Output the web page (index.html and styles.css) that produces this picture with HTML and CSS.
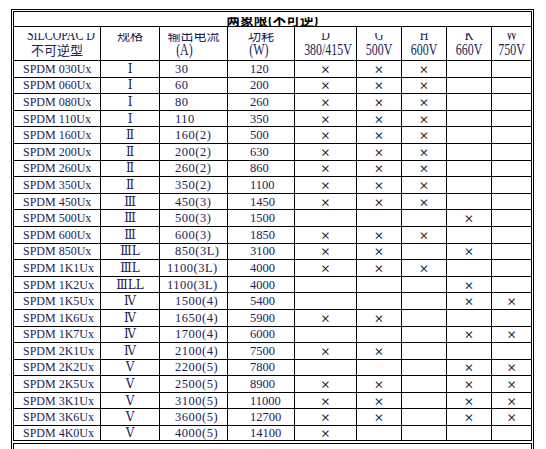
FILE: index.html
```html
<!DOCTYPE html>
<html lang="zh">
<head>
<meta charset="utf-8">
<title>两象限(不可逆)</title>
<link rel="stylesheet" href="styles.css">
</head>
<body>
<div class="frame">
<table class="grid">
<colgroup>
<col class="c1"><col class="c2"><col class="c3"><col class="c4"><col class="c5"><col class="c6"><col class="c7"><col class="c8"><col class="c9">
</colgroup>
<tr class="title"><td colspan="9"><div class="tclip"><span>两象限(不可逆)</span></div></td></tr>
<tr class="head">
<th><div class="h1"><span class="lat">SILCOPAC D</span></div><div class="h2 cjk">不可逆型</div></th>
<th><div class="h1"><span class="cjk">规格</span></div></th>
<th><div class="h1"><span class="cjk">输出电流</span></div><div class="h2 lat padA">(A)</div></th>
<th><div class="h1"><span class="cjk">功耗</span></div><div class="h2 lat padW">(W)</div></th>
<th><div class="h1"><span class="lat">D</span></div><div class="h2 lat">380/415V</div></th>
<th><div class="h1"><span class="lat">G</span></div><div class="h2 lat">500V</div></th>
<th><div class="h1"><span class="lat">H</span></div><div class="h2 lat">600V</div></th>
<th><div class="h1"><span class="lat">K</span></div><div class="h2 lat">660V</div></th>
<th><div class="h1"><span class="lat">W</span></div><div class="h2 lat">750V</div></th>
</tr>
<tr class="d"><td class="m">SPDM 030Ux</td><td class="r">Ⅰ</td><td class="a">30</td><td class="w">120</td><td class="x">×</td><td class="x">×</td><td class="x">×</td><td class="x"></td><td class="x"></td></tr>
<tr class="d"><td class="m">SPDM 060Ux</td><td class="r">Ⅰ</td><td class="a">60</td><td class="w">200</td><td class="x">×</td><td class="x">×</td><td class="x">×</td><td class="x"></td><td class="x"></td></tr>
<tr class="d"><td class="m">SPDM 080Ux</td><td class="r">Ⅰ</td><td class="a">80</td><td class="w">260</td><td class="x">×</td><td class="x">×</td><td class="x">×</td><td class="x"></td><td class="x"></td></tr>
<tr class="d"><td class="m">SPDM 110Ux</td><td class="r">Ⅰ</td><td class="a">110</td><td class="w">350</td><td class="x">×</td><td class="x">×</td><td class="x">×</td><td class="x"></td><td class="x"></td></tr>
<tr class="d"><td class="m">SPDM 160Ux</td><td class="r">Ⅱ</td><td class="a">160(2)</td><td class="w">500</td><td class="x">×</td><td class="x">×</td><td class="x">×</td><td class="x"></td><td class="x"></td></tr>
<tr class="d"><td class="m">SPDM 200Ux</td><td class="r">Ⅱ</td><td class="a">200(2)</td><td class="w">630</td><td class="x">×</td><td class="x">×</td><td class="x">×</td><td class="x"></td><td class="x"></td></tr>
<tr class="d"><td class="m">SPDM 260Ux</td><td class="r">Ⅱ</td><td class="a">260(2)</td><td class="w">860</td><td class="x">×</td><td class="x">×</td><td class="x">×</td><td class="x"></td><td class="x"></td></tr>
<tr class="d"><td class="m">SPDM 350Ux</td><td class="r">Ⅱ</td><td class="a">350(2)</td><td class="w">1100</td><td class="x">×</td><td class="x">×</td><td class="x">×</td><td class="x"></td><td class="x"></td></tr>
<tr class="d"><td class="m">SPDM 450Ux</td><td class="r">Ⅲ</td><td class="a">450(3)</td><td class="w">1450</td><td class="x">×</td><td class="x">×</td><td class="x">×</td><td class="x"></td><td class="x"></td></tr>
<tr class="d"><td class="m">SPDM 500Ux</td><td class="r">Ⅲ</td><td class="a">500(3)</td><td class="w">1500</td><td class="x"></td><td class="x"></td><td class="x"></td><td class="x">×</td><td class="x"></td></tr>
<tr class="d"><td class="m">SPDM 600Ux</td><td class="r">Ⅲ</td><td class="a">600(3)</td><td class="w">1850</td><td class="x">×</td><td class="x">×</td><td class="x">×</td><td class="x"></td><td class="x"></td></tr>
<tr class="d"><td class="m">SPDM 850Ux</td><td class="r">ⅢL</td><td class="a">850(3L)</td><td class="w">3100</td><td class="x">×</td><td class="x">×</td><td class="x"></td><td class="x">×</td><td class="x"></td></tr>
<tr class="d"><td class="m">SPDM 1K1Ux</td><td class="r">ⅢL</td><td class="a ac">1100(3L)</td><td class="w">4000</td><td class="x">×</td><td class="x">×</td><td class="x">×</td><td class="x"></td><td class="x"></td></tr>
<tr class="d"><td class="m">SPDM 1K2Ux</td><td class="r">ⅢLL</td><td class="a ac">1100(3L)</td><td class="w">4000</td><td class="x"></td><td class="x"></td><td class="x"></td><td class="x">×</td><td class="x"></td></tr>
<tr class="d"><td class="m">SPDM 1K5Ux</td><td class="r">Ⅳ</td><td class="a">1500(4)</td><td class="w">5400</td><td class="x"></td><td class="x"></td><td class="x"></td><td class="x">×</td><td class="x">×</td></tr>
<tr class="d"><td class="m">SPDM 1K6Ux</td><td class="r">Ⅳ</td><td class="a">1650(4)</td><td class="w">5900</td><td class="x">×</td><td class="x">×</td><td class="x"></td><td class="x"></td><td class="x"></td></tr>
<tr class="d"><td class="m">SPDM 1K7Ux</td><td class="r">Ⅳ</td><td class="a">1700(4)</td><td class="w">6000</td><td class="x"></td><td class="x"></td><td class="x"></td><td class="x">×</td><td class="x">×</td></tr>
<tr class="d"><td class="m">SPDM 2K1Ux</td><td class="r">Ⅳ</td><td class="a">2100(4)</td><td class="w">7500</td><td class="x">×</td><td class="x">×</td><td class="x"></td><td class="x"></td><td class="x"></td></tr>
<tr class="d"><td class="m">SPDM 2K2Ux</td><td class="r">Ⅴ</td><td class="a">2200(5)</td><td class="w">7800</td><td class="x"></td><td class="x"></td><td class="x"></td><td class="x">×</td><td class="x">×</td></tr>
<tr class="d"><td class="m">SPDM 2K5Ux</td><td class="r">Ⅴ</td><td class="a">2500(5)</td><td class="w">8900</td><td class="x">×</td><td class="x">×</td><td class="x"></td><td class="x">×</td><td class="x">×</td></tr>
<tr class="d"><td class="m">SPDM 3K1Ux</td><td class="r">Ⅴ</td><td class="a">3100(5)</td><td class="w">11000</td><td class="x">×</td><td class="x">×</td><td class="x"></td><td class="x">×</td><td class="x">×</td></tr>
<tr class="d"><td class="m">SPDM 3K6Ux</td><td class="r">Ⅴ</td><td class="a">3600(5)</td><td class="w">12700</td><td class="x">×</td><td class="x">×</td><td class="x"></td><td class="x">×</td><td class="x">×</td></tr>
<tr class="d last"><td class="m">SPDM 4K0Ux</td><td class="r">Ⅴ</td><td class="a">4000(5)</td><td class="w">14100</td><td class="x">×</td><td class="x"></td><td class="x"></td><td class="x"></td><td class="x"></td></tr>
</table>
<div class="next"></div>
</div>
</body>
</html>
```

FILE: styles.css
```css
html, body {
  margin: 0;
  padding: 0;
  background: #ffffff;
  overflow: hidden;
}
body {
  width: 546px;
  height: 449px;
  font-family: "Liberation Serif", "Noto Sans CJK SC", serif;
  color: #1b2258;
}
.frame {
  margin: 9px 0 0 11px;
  width: 519px;
  height: 470px;
  border: 1px solid #000;
  border-bottom: none;
  padding: 1px 1px 0 1px;
}
.grid {
  width: 519px;
  table-layout: fixed;
  border-collapse: collapse;
  border: 1px solid #000;
}
.grid td, .grid th {
  border: 1px solid #000;
  padding: 0;
  overflow: hidden;
  white-space: nowrap;
}
.c1 { width: 87px; }
.c2 { width: 59px; }
.c3 { width: 68px; }
.c4 { width: 67px; }
.c5 { width: 62px; }
.c6 { width: 45px; }
.c7 { width: 45px; }
.c8 { width: 45px; }
.c9 { width: 40px; }

/* title row */
.title td {
  height: 14px;
  vertical-align: top;
}
.tclip {
  height: 9px;
  margin-top: 5px;
  overflow: hidden;
  display: flex;
  flex-direction: column;
  justify-content: flex-end;
  align-items: center;
}
.tclip span {
  font-family: "Noto Sans CJK SC", sans-serif;
  font-weight: 700;
  font-size: 13.7px;
  line-height: 14px;
  color: #000;
  flex: none;
}

/* header row */
.head th {
  height: 33px;
  vertical-align: top;
  font-weight: normal;
  text-align: center;
}
.h1 {
  height: 9px;
  margin-top: 6px;
  overflow: hidden;
  display: flex;
  flex-direction: column;
  justify-content: flex-end;
}
.h1 span {
  flex: none;
  display: block;
  line-height: 14px;
}
.h2 {
  line-height: 15px;
}
.cjk {
  font-family: "Noto Sans CJK SC", sans-serif;
  font-size: 13px;
}
.lat {
  font-family: "Liberation Serif", serif;
  font-size: 17px;
  transform: scaleX(0.7);
  transform-origin: center;
}
div.lat { display: block; }
.padA { padding-right: 26px; }
.padW { padding-right: 6px; }

/* data rows */
.d td {
  height: 15.6px;
  line-height: 14px;
  font-size: 12px;
  vertical-align: middle;
}
.d.last td { height: 14px; }
.m {
  padding-left: 9px !important;
  font-size: 12px;
}
.r {
  text-align: center;
  font-family: "DejaVu Serif", "Noto Sans CJK SC", serif;
  font-size: 12px !important;
}
.a {
  padding-left: 15px !important;
  font-size: 12.5px !important;
  letter-spacing: 0.5px;
}
.a.ac {
  padding-left: 7px !important;
}
.w {
  padding-left: 22px !important;
  font-size: 12.5px !important;
}
.x {
  text-align: center;
  font-family: "Inter", "Liberation Sans", sans-serif;
  font-weight: 300;
  font-size: 15px !important;
  color: #111;
}

.next {
  margin-top: 2px;
  height: 40px;
  border: 1px solid #000;
  border-bottom: none;
}
```
